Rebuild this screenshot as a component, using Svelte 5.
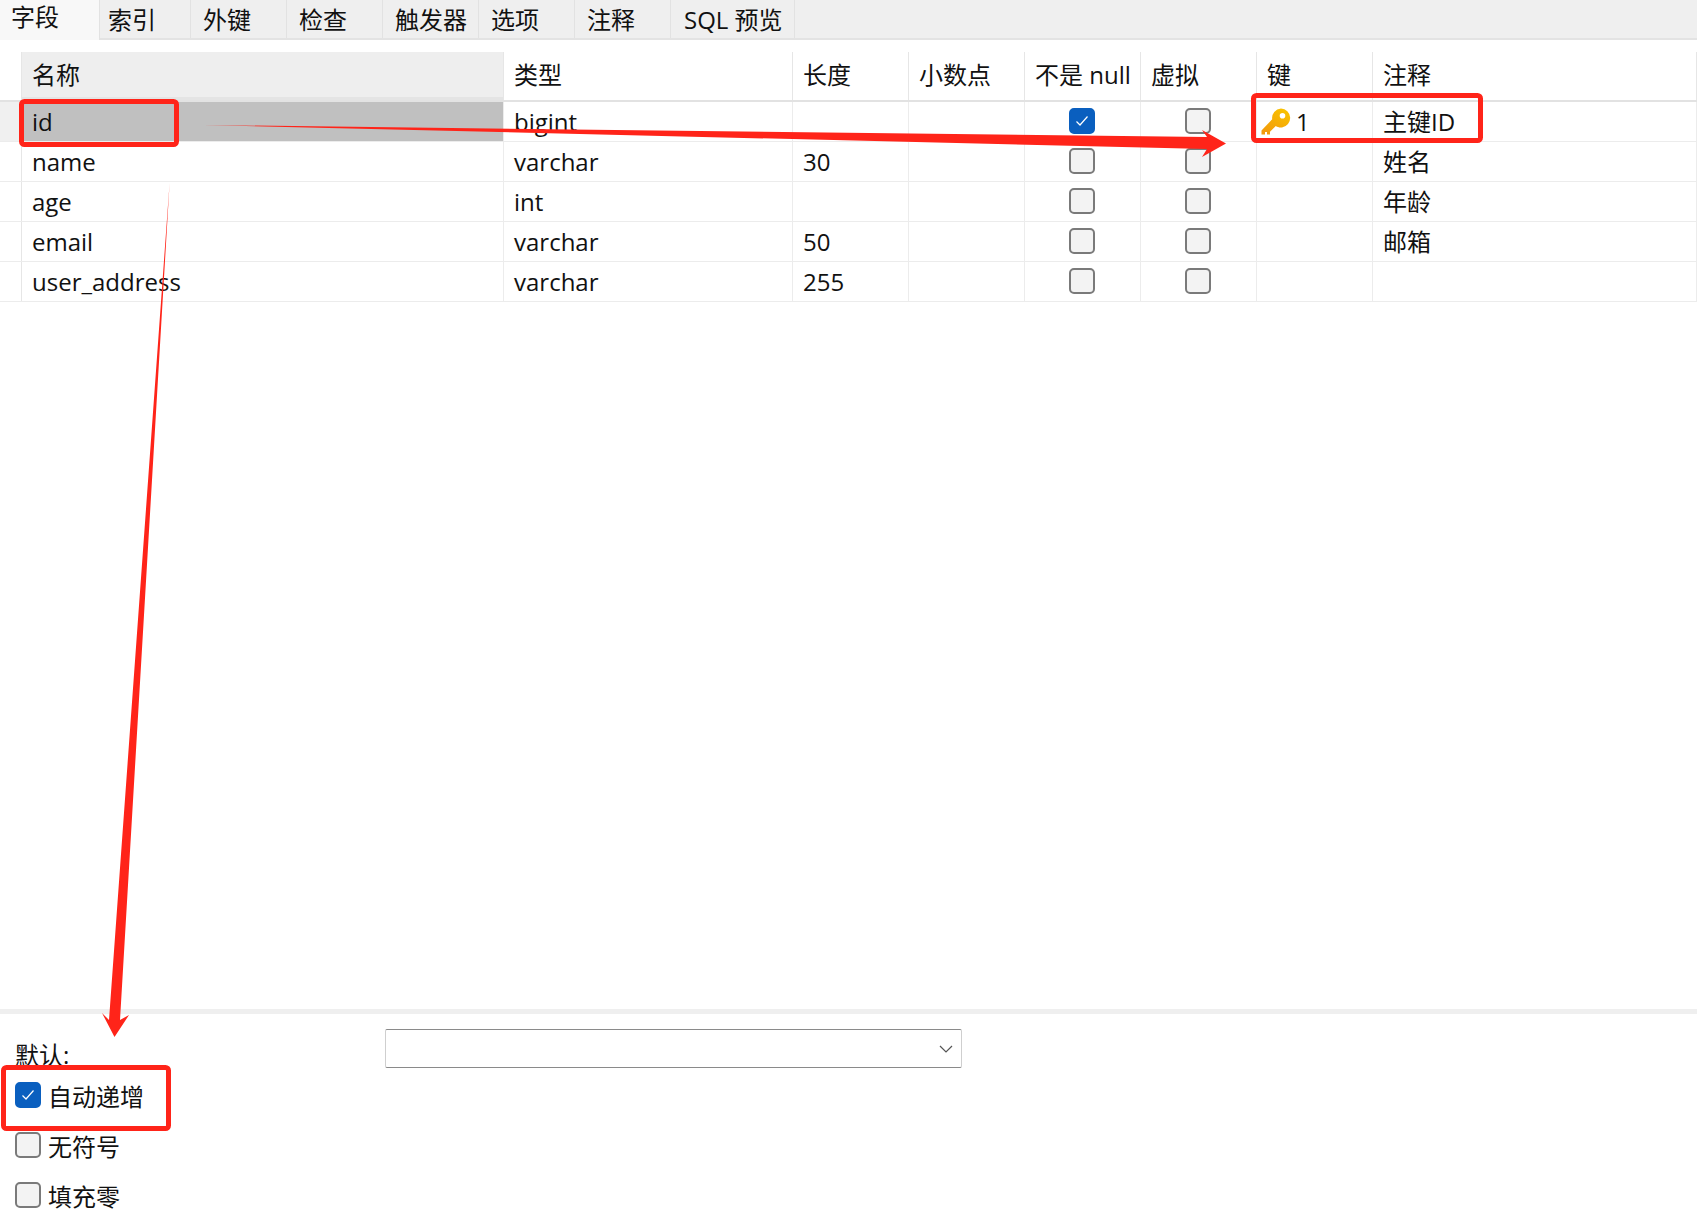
<script>
  const tabs = ['字段', '索引', '外键', '检查', '触发器', '选项', '注释', 'SQL 预览'];
  const headers = ['名称', '类型', '长度', '小数点', '不是 null', '虚拟', '键', '注释'];
  const rows = [
    { name: 'id', type: 'bigint', len: '', notNull: true, key: '1', note: '主键ID' },
    { name: 'name', type: 'varchar', len: '30', notNull: false, key: '', note: '姓名' },
    { name: 'age', type: 'int', len: '', notNull: false, key: '', note: '年龄' },
    { name: 'email', type: 'varchar', len: '50', notNull: false, key: '', note: '邮箱' },
    { name: 'user_address', type: 'varchar', len: '255', notNull: false, key: '', note: '' }
  ];
  const options = [
    { label: '自动递增', on: true },
    { label: '无符号', on: false },
    { label: '填充零', on: false }
  ];
</script>

{#snippet box(on)}
  <span class="check" class:on>
    {#if on}
      <svg width="14" height="12" viewBox="0 0 14 12"><path d="M1.5 6.5 L5 10 L12.5 1.5" fill="none" stroke="#fff" stroke-width="1.2" /></svg>
    {/if}
  </span>
{/snippet}

<div class="page">
  <nav class="tabs">
    {#each tabs as tab, i}
      <div class="tab" class:active={i === 0}>{tab}</div>
    {/each}
  </nav>

  <section class="table">
    <div class="row head">
      <div class="gutter"></div>
      {#each headers as h, i}
        <div class="cell" class:first={i === 0}>{h}</div>
      {/each}
    </div>
    {#each rows as r, i}
      <div class="row body" class:selected={i === 0}>
        <div class="gutter"></div>
        <div class="cell namecell">{r.name}</div>
        <div class="cell">{r.type}</div>
        <div class="cell">{r.len}</div>
        <div class="cell"></div>
        <div class="cell center">{@render box(r.notNull)}</div>
        <div class="cell center">{@render box(false)}</div>
        <div class="cell keycell">
          {#if r.key}
            <svg class="key" width="32" height="28" viewBox="0 0 32 28">
              <defs>
                <linearGradient id="keygrad" x1="0.8" y1="0" x2="0.2" y2="1">
                  <stop offset="0" stop-color="#f9c200" />
                  <stop offset="1" stop-color="#f29a0c" />
                </linearGradient>
              </defs>
              <path fill="url(#keygrad)" fill-rule="evenodd" d="M21 1.5a9.5 9.5 0 0 1 1 18.9c-2.4.3-4.4-.2-6.2-1.4L10 24.800v2.700H7V25H5v2.500H1.500v-4L12.200 12.300A9.500 9.500 0 0 1 21 1.500Zm1.500 4.500a2.800 2.800 0 1 0 0 5.600 2.800 2.800 0 0 0 0-5.600Z" />
            </svg>
            <span>{r.key}</span>
          {/if}
        </div>
        <div class="cell">{r.note}</div>
      </div>
    {/each}
  </section>

  <div class="divider"></div>

  <section class="bottom">
    <div class="labels">
      <div class="deflabel">默认:</div>
      {#each options as o}
        <div class="option">{@render box(o.on)}<span>{o.label}</span></div>
      {/each}
    </div>
    <div class="select">
      <svg width="14" height="8" viewBox="0 0 14 8"><path d="M1 1 L7 7 L13 1" fill="none" stroke="#555" stroke-width="1.2" /></svg>
    </div>
  </section>

  <!-- annotations drawn over the screenshot -->
  <svg class="marks" width="1697" height="1221" viewBox="0 0 1697 1221">
    <g fill="none" stroke="#ff2419" stroke-width="5">
      <rect x="21.500" y="101.500" width="155" height="43" rx="3" />
      <rect x="1253.500" y="95.500" width="227" height="45" rx="3" />
      <rect x="3.500" y="1067.500" width="165" height="61" rx="3" />
    </g>
    <path fill="#ff2419" d="M203 125 L1207 137 L1202 130 L1226 143.500 L1202 157 L1207 149 Z" />
    <path fill="#ff2419" d="M169.600 183 L120 1020 L129 1015 L114.500 1037 L102 1013 L109 1020 Z" />
  </svg>
</div>

<style>
  :global(body) {
    margin: 0;
    background: #fff;
  }
  .page {
    position: relative;
    width: 1697px;
    height: 1221px;
    display: flex;
    flex-direction: column;
    overflow: hidden;
    font-family: "Open Sans", "Noto Sans CJK SC", sans-serif;
    font-size: 24px;
    color: #111;
    background: #fff;
  }
  .tabs {
    display: flex;
    flex: none;
    height: 40px;
    box-sizing: border-box;
    background: #efefef;
    border-bottom: 2px solid #e3e3e3;
  }
  .tab {
    width: 96px;
    box-sizing: border-box;
    padding-left: 12px;
    height: 38px;
    line-height: 40px;
    border-right: 1px solid #e2e2e2;
    white-space: nowrap;
  }
  .tab.active {
    width: 100px;
    height: 40px;
    padding-left: 11px;
    line-height: 34px;
    background: #f8f8f8;
  }
  .tab:nth-child(2) {
    width: 91px;
    padding-left: 8px;
  }
  .tab:last-child {
    width: 124px;
    padding-left: 13px;
  }
  .table {
    flex: 1;
    padding-top: 12px;
  }
  .row {
    display: grid;
    grid-template-columns: 22px 482px 289px repeat(5, 116px) 1fr;
    box-sizing: border-box;
    height: 40px;
    border-bottom: 1px solid #ececec;
  }
  .row.head {
    height: 50px;
    border-bottom: 2px solid #e2e2e2;
  }
  .gutter {
    border-right: 1px solid #e6e6e6;
  }
  .cell {
    box-sizing: border-box;
    padding-left: 10px;
    border-right: 1px solid #ececec;
    line-height: 40px;
    height: 39px;
    white-space: nowrap;
  }
  .head .gutter,
  .head .cell {
    border-right-color: #e6e6e6;
    line-height: 46px;
    height: 48px;
  }
  .head .first {
    background: linear-gradient(#eee 0 45px, #e4e4e4 45px);
  }
  .selected .gutter {
    background: #f0f0f0;
  }
  .selected .namecell {
    background: #c0c0c0;
  }
  .cell.center {
    display: flex;
    align-items: center;
    justify-content: center;
    padding: 0 2px 1px 0;
  }
  .keycell {
    display: flex;
    align-items: center;
    gap: 4px;
    padding-left: 3px;
  }
  .key {
    flex: none;
    margin-bottom: 2px;
  }
  .check {
    display: inline-flex;
    align-items: center;
    justify-content: center;
    width: 26px;
    height: 26px;
    flex: none;
    box-sizing: border-box;
    border: 2px solid #7a7a7a;
    border-radius: 5px;
    background: #f3f3f3;
  }
  .check.on {
    background: #0a5fbf;
    border-color: #0a5fbf;
  }
  .divider {
    flex: none;
    height: 5px;
    background: #efefef;
  }
  .bottom {
    flex: none;
    height: 207px;
    display: flex;
    position: relative;
  }
  .labels {
    width: 385px;
    box-sizing: border-box;
    padding: 26px 0 0 15px;
  }
  .deflabel {
    height: 42px;
    line-height: 29px;
  }
  .option {
    display: flex;
    align-items: center;
    gap: 7px;
    height: 26px;
    margin-bottom: 24px;
  }
  .select {
    width: 577px;
    height: 39px;
    margin-top: 15px;
    box-sizing: border-box;
    display: flex;
    align-items: center;
    justify-content: flex-end;
    padding-right: 8px;
    border: 1px solid #cfcfcf;
    border-top-color: #8a8a8a;
    border-bottom-color: #8a8a8a;
    border-radius: 2px;
  }
  .marks {
    position: absolute;
    left: 0;
    top: 0;
    pointer-events: none;
  }
</style>
